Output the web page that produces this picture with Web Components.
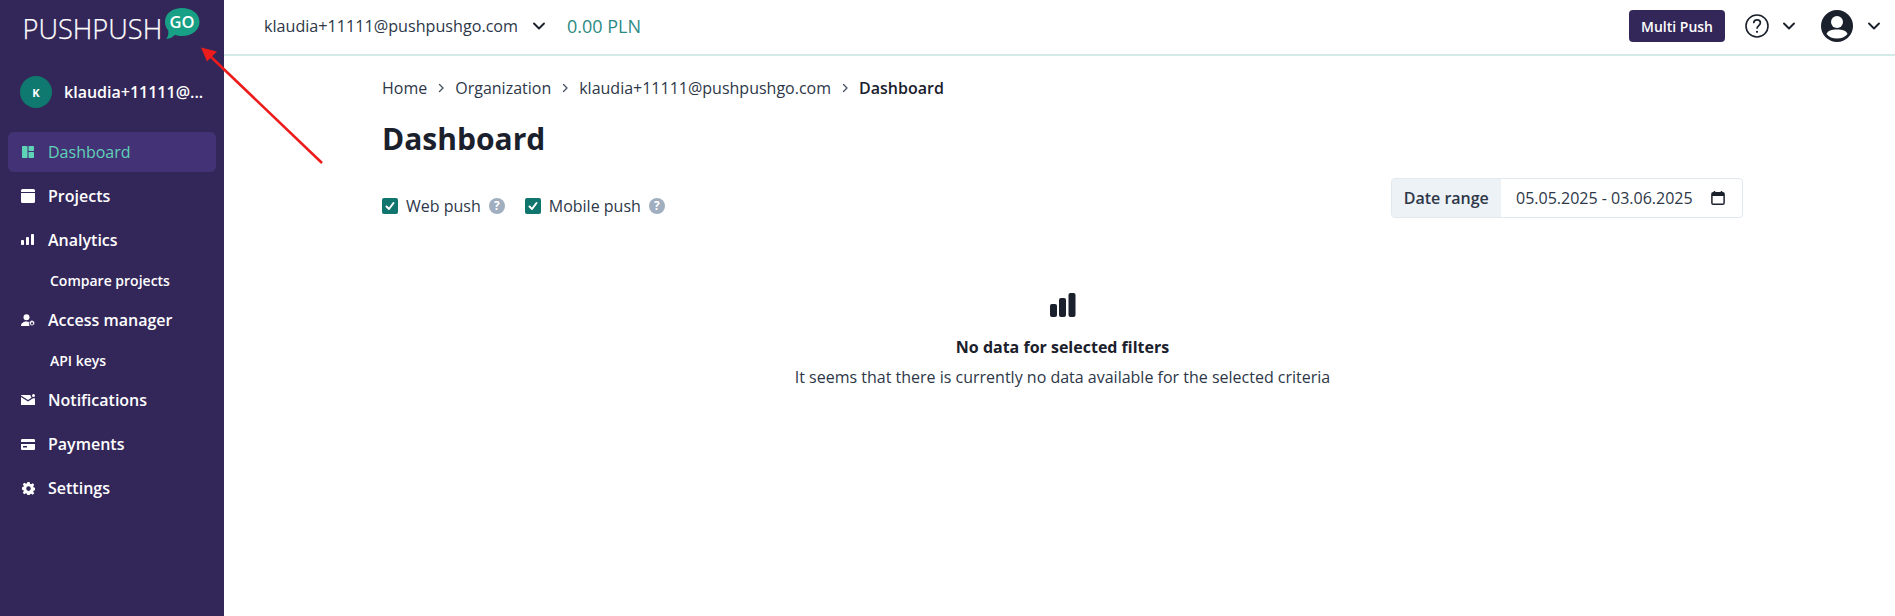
<!DOCTYPE html>
<html><head><meta charset="utf-8"><style>
html,body{margin:0;height:100%;overflow:hidden;background:#fff;font-family:"Open Sans",sans-serif;color:#1a202c}
</style></head><body>
<app-shell>
  <side-bar slot="side">
    <nav-item active label="Dashboard" icon="dash"></nav-item>
    <nav-item label="Projects" icon="proj"></nav-item>
    <nav-item label="Analytics" icon="chart"></nav-item>
    <nav-item sub label="Compare projects"></nav-item>
    <nav-item label="Access manager" icon="access"></nav-item>
    <nav-item sub label="API keys"></nav-item>
    <nav-item label="Notifications" icon="mail"></nav-item>
    <nav-item label="Payments" icon="card"></nav-item>
    <nav-item label="Settings" icon="gear"></nav-item>
  </side-bar>
  <top-bar slot="top"></top-bar>
  <dash-page></dash-page>
</app-shell>
<script>
function def(name,html,init){customElements.define(name,class extends HTMLElement{
  constructor(){super();this.attachShadow({mode:'open'}).innerHTML=html;}
  connectedCallback(){if(init)init.call(this,this.shadowRoot);}
});}
const chev=(s=14)=>`<svg width="${s}" height="${s}" viewBox="0 0 14 14" fill="none" stroke="#1a202c" stroke-width="1.9" stroke-linecap="round" stroke-linejoin="round"><path d="M2 4.500l5 5 5-5"/></svg>`;

def('app-shell',`<style>
:host{display:grid;grid-template-columns:224px 1fr;grid-template-rows:56px 1fr;width:1895px;height:616px;position:relative;overflow:hidden}
.s{grid-row:1/3;display:block}
svg.a{position:absolute;left:0;top:0;pointer-events:none}
</style>
<div class="s"><slot name="side"></slot></div>
<div><slot name="top"></slot></div>
<div><slot></slot></div>
<svg class="a" width="400" height="200" viewBox="0 0 400 200"><path d="M322 163L209 55" stroke="#ec1c1c" stroke-width="2.600"/><path d="M201 47.500l6 14 10-10z" fill="#ec1c1c"/></svg>`);

def('side-bar',`<style>
:host{display:block;height:616px;background:#332659;box-sizing:border-box}
.logo{height:50px;display:flex;align-items:flex-start;padding-left:22.500px;position:relative;color:#fff}
.t{width:138.500px;white-space:nowrap;font:300 27.200px/1 "Open Sans",sans-serif;-webkit-text-stroke:.25px #fff;margin-top:15px}
.b{margin-left:2px;margin-top:8px;width:37px;height:32px;position:relative}
.b svg{position:absolute;left:0;top:0}
.b span{position:absolute;left:6.500px;top:2px;font:600 16.500px/24px "Open Sans",sans-serif;color:#fff}
.u{display:flex;align-items:center;height:32px;margin:26px 0 0 20px;gap:12px;color:#fff;font-weight:600;font-size:16px}
.av{width:32px;height:32px;border-radius:50%;background:#10796f;font-size:11px;font-weight:700;display:flex;align-items:center;justify-content:center}
.n{margin-top:24px;padding:0 8px;display:flex;flex-direction:column;gap:4px}
</style>
<div class="logo"><span class="t">PUSHPUSH</span><div class="b"><svg width="37" height="32" viewBox="0 0 37 32"><path d="M19 0C28 0 36.500 5 36.500 14c0 8-7.500 14-17.500 14-2.500 0-5.500-.4-7-1.200C10 29 7 31 3 31c1.800-1.800 2.800-4.500 2.300-8.500C3 20 2 17 2 14 2 5 10 0 19 0z" fill="#17a085"/></svg><span>GO</span></div></div>
<div class="u"><span class="av">K</span><span>klaudia+11111@...</span></div>
<div class="n"><slot></slot></div>`);

const icons={
dash:`<svg width="12" height="12" viewBox="0 0 12 12" fill="currentColor"><rect width="5.500" height="12" rx=".7"/><rect x="6.500" width="5.500" height="5" rx=".7"/><rect x="6.500" y="6" width="5.500" height="6" rx=".7"/></svg>`,
proj:`<svg width="14" height="14" viewBox="0 0 14 14" fill="currentColor"><path d="M1.500 0h11A1.500 1.500 0 0 1 14 1.500V3H0V1.500A1.500 1.500 0 0 1 1.500 0zM0 4h14v8.500a1.500 1.500 0 0 1-1.500 1.500h-11A1.500 1.500 0 0 1 0 12.500z"/></svg>`,
chart:`<svg width="14" height="12" viewBox="0 0 14 12" fill="currentColor"><rect y="6" width="3" height="5" rx=".8"/><rect x="5" y="3" width="3" height="8" rx=".8"/><rect x="10" y="0" width="3" height="11" rx=".8"/></svg>`,
access:`<svg width="15" height="13" viewBox="0 0 15 13" fill="currentColor"><circle cx="5.500" cy="3.300" r="3"/><path d="M0 12c0-3 2.500-4.500 5.500-4.500 1 0 1.800.2 2.500.5-.3 1.300-.2 3 .8 4H0z"/><path fill-rule="evenodd" d="M11.500 6.500l.4 1 1-.2.6 1-.7.7.7.8-.6 1-1-.2-.4 1h-1.100l-.4-1-1 .2-.6-1 .7-.8-.7-.7.6-1 1 .2.400-1zM11 8.300a1.100 1.100 0 1 0 0 2.200 1.100 1.100 0 0 0 0-2.200z"/></svg>`,
mail:`<svg width="14" height="12" viewBox="0 0 14 12" fill="currentColor"><path d="M0 1h9.500c0 1 .5 2 1.200 2.600L7 6 0 1.500zM0 3l7 4.500 5-3.200c.7.200 1.300.2 2 0V11H0z"/><circle cx="12.500" cy="1.500" r="1.500"/></svg>`,
card:`<svg width="14" height="11" viewBox="0 0 14 11" fill="currentColor"><path d="M1.200 0h11.600A1.200 1.200 0 0 1 14 1.200V3H0V1.200A1.200 1.200 0 0 1 1.200 0zM0 5h14v4.800A1.200 1.200 0 0 1 12.800 11H1.200A1.200 1.200 0 0 1 0 9.800zm2 2v1.500h4V7z" fill-rule="evenodd"/></svg>`,
gear:`<svg width="13" height="13" viewBox="0 0 24 24" fill="currentColor"><path fill-rule="evenodd" d="M14 0l.7 3.300 2.200.9 2.800-1.900 2.900 2.900-1.900 2.800.9 2.200 3.300.7v4l-3.300.7-.9 2.200 1.900 2.800-2.900 2.900-2.800-1.900-2.200.9L14 25h-4l-.7-3.300-2.200-.9-2.800 1.900-2.900-2.900 1.900-2.800-.9-2.200L-.9 14v-4l3.300-.7.9-2.200-1.900-2.800 2.900-2.900 2.800 1.900 2.200-.9L10 0zM12 8a4.200 4.200 0 1 0 0 8.400A4.200 4.200 0 0 0 12 8z"/></svg>`
};
customElements.define('nav-item',class extends HTMLElement{
 constructor(){super();this.attachShadow({mode:'open'});}
 connectedCallback(){
  const a=this.hasAttribute('active'),s=this.hasAttribute('sub');
  this.shadowRoot.innerHTML=`<style>
  :host{display:flex;align-items:center;height:${s?32:40}px;border-radius:6px;box-sizing:border-box;color:${a?'#5fd3b8':'#fff'};background:${a?'#433275':'transparent'};font-size:${s?14:16}px;font-weight:${a?500:600};padding-left:${s?42:12}px}
  i{display:flex;width:16px;height:16px;align-items:center;justify-content:center;margin-right:12px;font-style:normal}
  </style>${s?'':`<i>${icons[this.getAttribute('icon')]}</i>`}<span>${this.getAttribute('label')}</span>`;
 }
});

def('top-bar',`<style>
:host{display:flex;align-items:center;height:56px;box-sizing:border-box;border-bottom:2px solid #d2ebe7;padding:0 14px 2px 40px;background:#fff}
.e{font-size:16.150px;color:#2d3748}
.c{margin-left:14px;display:flex}
.p{margin-left:21px;color:#2c8a82;font-size:18px}
.sp{flex:1}
button{all:unset;box-sizing:border-box;background:#332659;color:#fff;font:600 14px "Open Sans",sans-serif;height:32px;width:96px;text-align:center;line-height:31px;border-radius:4px}
.q{margin-left:20px;display:flex}.ch{display:flex;margin-left:13px}
.av{margin-left:25px;display:flex}.av + .ch{margin-left:14px}
</style>
<span class="e">klaudia+11111@pushpushgo.com</span><span class="c">${chev()}</span><span class="p">0.00 PLN</span><span class="sp"></span>
<button>Multi Push</button>
<span class="q"><svg width="24" height="24" viewBox="0 0 24 24" fill="none" stroke="#1a202c"><circle cx="12" cy="12" r="11" stroke-width="1.600"/><path d="M8.700 9.200C8.800 7 10.300 5.800 12.100 5.800c2 0 3.300 1.300 3.300 3 0 2.900-3.400 2.800-3.400 6" stroke-width="1.700" fill="none"/><circle cx="12" cy="17.800" r="1.100" fill="#1a202c" stroke="none"/></svg></span>
<span class="ch">${chev()}</span>
<span class="av"><svg width="32" height="32" viewBox="0 0 32 32"><circle cx="16" cy="16" r="16" fill="#1a202c"/><circle cx="16" cy="12" r="6" fill="#fff"/><path d="M5.500 24c1.500-3.500 5-4.500 10.500-4.500S25 20.500 26.500 24c-2.500 3-6 4.500-10.500 4.500S8 27 5.500 24z" fill="#fff"/></svg></span>
<span class="ch">${chev()}</span>`);

def('check-box',`<style>
:host{display:inline-flex;align-items:center;font-size:16px;color:#2d3748}
.b{width:16px;height:16px;border-radius:2px;background:#10756d;display:flex;align-items:center;justify-content:center;margin-right:8px}
.h{margin-left:8px;width:16px;height:16px;border-radius:50%;background:#a0aec0;color:#fff;font:700 12px/16px "Open Sans",sans-serif;text-align:center}
</style><span class="b"><svg width="12" height="12" viewBox="0 0 12 12" fill="none" stroke="#fff" stroke-width="2" stroke-linecap="round" stroke-linejoin="round"><path d="M2.500 6.500l2.500 2.500 4.500-6"/></svg></span><slot></slot><span class="h">?</span>`);

const sep=`<svg width="12" height="12" viewBox="0 0 12 12" fill="none" stroke="#4a5568" stroke-width="1.400" stroke-linecap="round" stroke-linejoin="round"><path d="M4.500 2.500L8 6l-3.500 3.500"/></svg>`;
def('bread-crumbs',`<style>
:host{display:flex;align-items:center;height:24px;font-size:16px;color:#2d3748}
i{display:flex;margin:0 8px}
b{font-weight:600;color:#1a202c}
</style><span>Home</span><i>${sep}</i><span>Organization</span><i>${sep}</i><span>klaudia+11111@pushpushgo.com</span><i>${sep}</i><b>Dashboard</b>`);

def('date-range',`<style>
:host{display:flex;height:40px;box-sizing:border-box;border:1px solid #e2e8f0;border-radius:4px;font-size:16px;width:352px;color:#2d3748;overflow:hidden}
.l{background:#edf2f7;width:108.500px;display:flex;align-items:center;justify-content:center;font-weight:600;color:#2d3748;box-sizing:border-box}
.v{flex:1;display:flex;align-items:center;padding-left:15.500px}
svg{margin-left:auto;margin-right:16px}
</style><div class="l">Date range</div><div class="v">05.05.2025 - 03.06.2025<svg width="16" height="16" viewBox="0 0 16 16" fill="none"><rect x="1.900" y="2.800" width="12.200" height="11.400" rx="1.300" stroke="#1a202c" stroke-width="1.500"/><rect x="2" y="3" width="12" height="3" fill="#1a202c"/><path d="M4.500 1v2M11.500 1v2" stroke="#1a202c" stroke-width="1.500"/></svg></div>`);

def('empty-state',`<style>
:host{display:flex;flex-direction:column;align-items:center;margin-top:75px}
svg{display:block}
.a{margin-top:18px;font-weight:700;font-size:16px;line-height:24px;color:#1a202c}
.b{margin-top:6px;font-size:16px;line-height:24px;color:#2d3748}
</style><svg width="26" height="24" viewBox="0 0 26 24" fill="#1a202c"><rect y="11" width="7" height="13" rx="2"/><rect x="9.500" y="5" width="7" height="19" rx="2" transform="translate(-.5)"/><rect x="18.500" y="0" width="7" height="24" rx="2"/></svg>
<div class="a">No data for selected filters</div><div class="b">It seems that there is currently no data available for the selected criteria</div>`);

def('dash-page',`<style>
:host{display:block;padding:20px 152px 0 158px}
h1{margin:19px 0 0;font-size:30px;line-height:40px;font-weight:700;color:#1a202c}
.r{display:flex;justify-content:space-between;align-items:flex-start;margin-top:19px}
.f{display:flex;gap:20px;padding-top:17px}
</style><bread-crumbs></bread-crumbs><h1>Dashboard</h1>
<div class="r"><div class="f"><check-box>Web push</check-box><check-box>Mobile push</check-box></div><date-range></date-range></div>
<empty-state></empty-state>`);
</script>
</body></html>
